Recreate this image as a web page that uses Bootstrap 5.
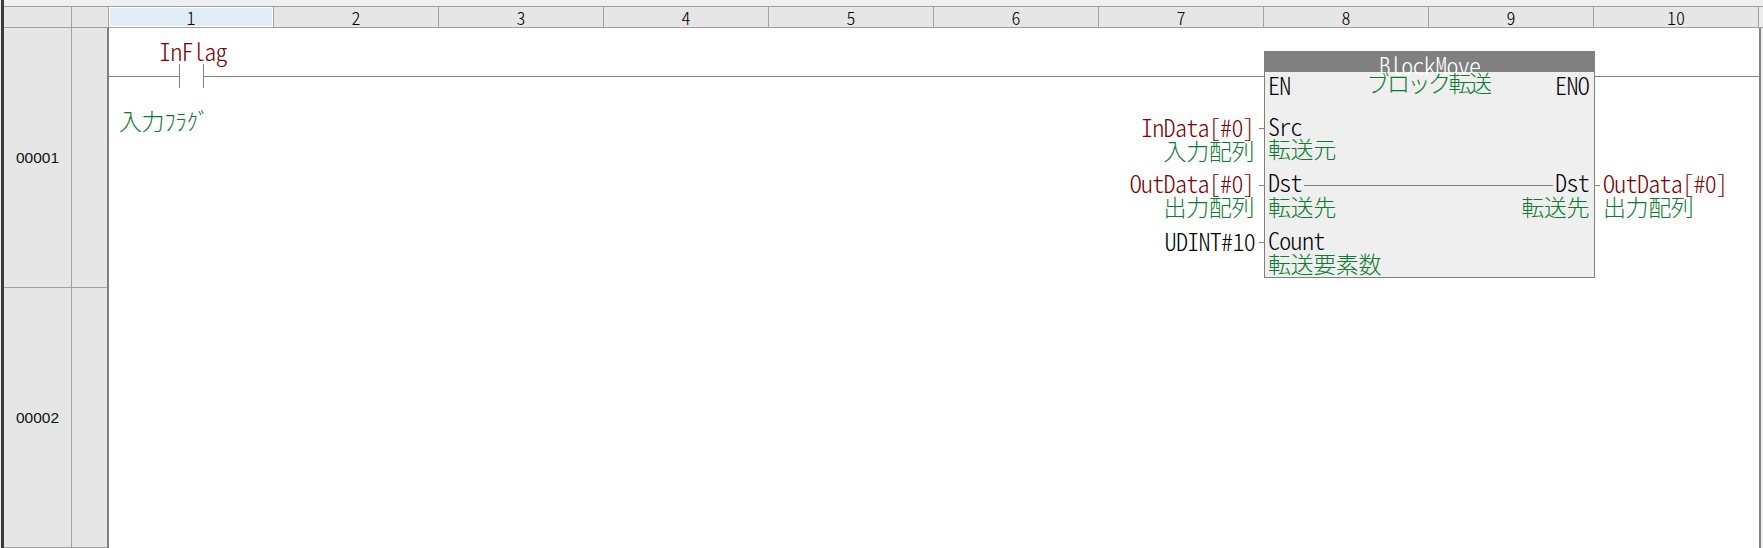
<!DOCTYPE html>
<html lang="ja">
<head>
<meta charset="utf-8">
<title>Ladder</title>
<link rel="stylesheet" href="https://cdn.jsdelivr.net/npm/bootstrap@5.3.0/dist/css/bootstrap.min.css">
<style>
html,body{margin:0;background:#f0f0f0;overflow:hidden}
.app{width:1762px;height:548px;margin-left:1px;border-left:3px solid #3c3c3c;padding-top:6px;font-family:"Noto Sans CJK JP","Liberation Sans",sans-serif;font-weight:300}
.hdr-row{height:22px;border-top:1px solid #a0a0a0;border-bottom:1px solid #a0a0a0;background:#e6e6e6;}
.h-a{width:68px;border-right:1px solid #a0a0a0;flex:none}
.h-b{width:37px;border-right:1px solid #a0a0a0;flex:none}
.h-col{width:165px;flex:none;border-right:1px solid #a0a0a0;text-align:center;font-size:18px;line-height:20px;color:#000;font-feature-settings:"hwid"}
.h-col.on{background:#e1edf6;box-shadow:inset 0 0 0 1px #fff}
.h-end{flex:1;background:#ececec}
.body-row{height:520px}
.rows-a{width:68px;flex:none;background:#e6e6e6;border-right:1px solid #a0a0a0}
.rows-b{width:37px;flex:none;background:#e6e6e6;border-right:2px solid #808080}
.rw{height:260px;border-bottom:1px solid #a0a0a0;font:15.5px/1 "Liberation Sans",sans-serif;color:#111}
.canvas{width:1652px;flex:none;background:#fff;position:relative;overflow:hidden;border-right:2px solid #808080}
.rail-end{flex:1;background:#f0f0f0}
.t{position:absolute;line-height:24px;white-space:nowrap;font-feature-settings:"hwid"}
.var{color:#800000;font-size:24px;letter-spacing:-.7px}
.cmt{color:#0d7a30;font-size:23px;letter-spacing:-.4px}
.blk{color:#000;font-size:24px;letter-spacing:-.7px}
.wire{position:absolute;background:#808080;height:1px}
.tick{position:absolute;background:#808080;width:1px}
.fb{position:absolute;left:1155px;top:23px;width:331px;height:227px;background:#efefef;border:1px solid #808080;border-width:0 1px 1px 1px}
.fb-title{height:21px;background:#808080;margin:0 -1px;color:#fff;font-size:24px;line-height:28px;letter-spacing:-.7px;text-align:center;font-feature-settings:"hwid"}
.fb-sub{left:0;right:3px;text-align:center;letter-spacing:-2.5px}
</style>
</head>
<body>
<div class="app">
  <div class="hdr-row d-flex">
    <div class="h-a"></div><div class="h-b"></div>
    <div class="h-col on">1</div><div class="h-col">2</div><div class="h-col">3</div><div class="h-col">4</div><div class="h-col">5</div><div class="h-col">6</div><div class="h-col">7</div><div class="h-col">8</div><div class="h-col">9</div><div class="h-col">10</div>
    <div class="h-end"></div>
  </div>
  <div class="body-row d-flex">
    <div class="rows-a">
      <div class="rw d-flex align-items-center justify-content-center">00001</div>
      <div class="rw d-flex align-items-center justify-content-center">00002</div>
    </div>
    <div class="rows-b"><div class="rw"></div><div class="rw"></div></div>
    <div class="canvas">
      <div class="wire" style="left:0;width:70px;top:48px"></div>
      <div class="wire" style="left:94px;width:1061px;top:48px"></div>
      <div class="wire" style="left:1486px;width:164px;top:48px"></div>
      <div class="tick" style="left:70px;top:36px;height:24px"></div>
      <div class="tick" style="left:94px;top:36px;height:24px"></div>
      <div class="t var" style="left:50px;top:11px">InFlag</div>
      <div class="t cmt" style="left:10px;top:80px">入力ﾌﾗｸﾞ</div>

      <div class="t var" style="right:505px;top:87px;">InData[#0]</div>
      <div class="t cmt" style="right:505px;top:110px;">入力配列</div>
      <div class="t var" style="right:505px;top:143px;">OutData[#0]</div>
      <div class="t cmt" style="right:505px;top:166px;">出力配列</div>
      <div class="t blk" style="right:504px;top:201px;">UDINT#10</div>
      <div class="wire" style="left:1150px;width:5px;top:100px"></div>
      <div class="wire" style="left:1150px;width:5px;top:157px"></div>
      <div class="wire" style="left:1150px;width:5px;top:214px"></div>

      <div class="fb">
        <div class="fb-title">BlockMove</div>
        <div class="t cmt fb-sub" style="top:19px">ブロック転送</div>
        <div class="t blk" style="left:3px;top:22px">EN</div>
        <div class="t blk" style="right:5px;top:22px">ENO</div>
        <div class="t blk" style="left:3px;top:63px">Src</div>
        <div class="t cmt" style="left:3px;top:85px">転送元</div>
        <div class="t blk" style="left:3px;top:119px">Dst</div>
        <div class="wire" style="left:39px;width:249px;top:134px"></div>
        <div class="t blk" style="right:5px;top:119px">Dst</div>
        <div class="t cmt" style="left:3px;top:143px">転送先</div>
        <div class="t cmt" style="right:5px;top:143px">転送先</div>
        <div class="t blk" style="left:3px;top:177px">Count</div>
        <div class="t cmt" style="left:3px;top:200px">転送要素数</div>
      </div>
      <div class="wire" style="left:1486px;width:5px;top:157px"></div>
      <div class="t var" style="left:1494px;top:143px">OutData[#0]</div>
      <div class="t cmt" style="left:1494px;top:166px">出力配列</div>
    </div>
    <div class="rail-end"></div>
  </div>
</div>
<script src="https://cdn.jsdelivr.net/npm/bootstrap@5.3.0/dist/js/bootstrap.bundle.min.js"></script>
</body>
</html>
